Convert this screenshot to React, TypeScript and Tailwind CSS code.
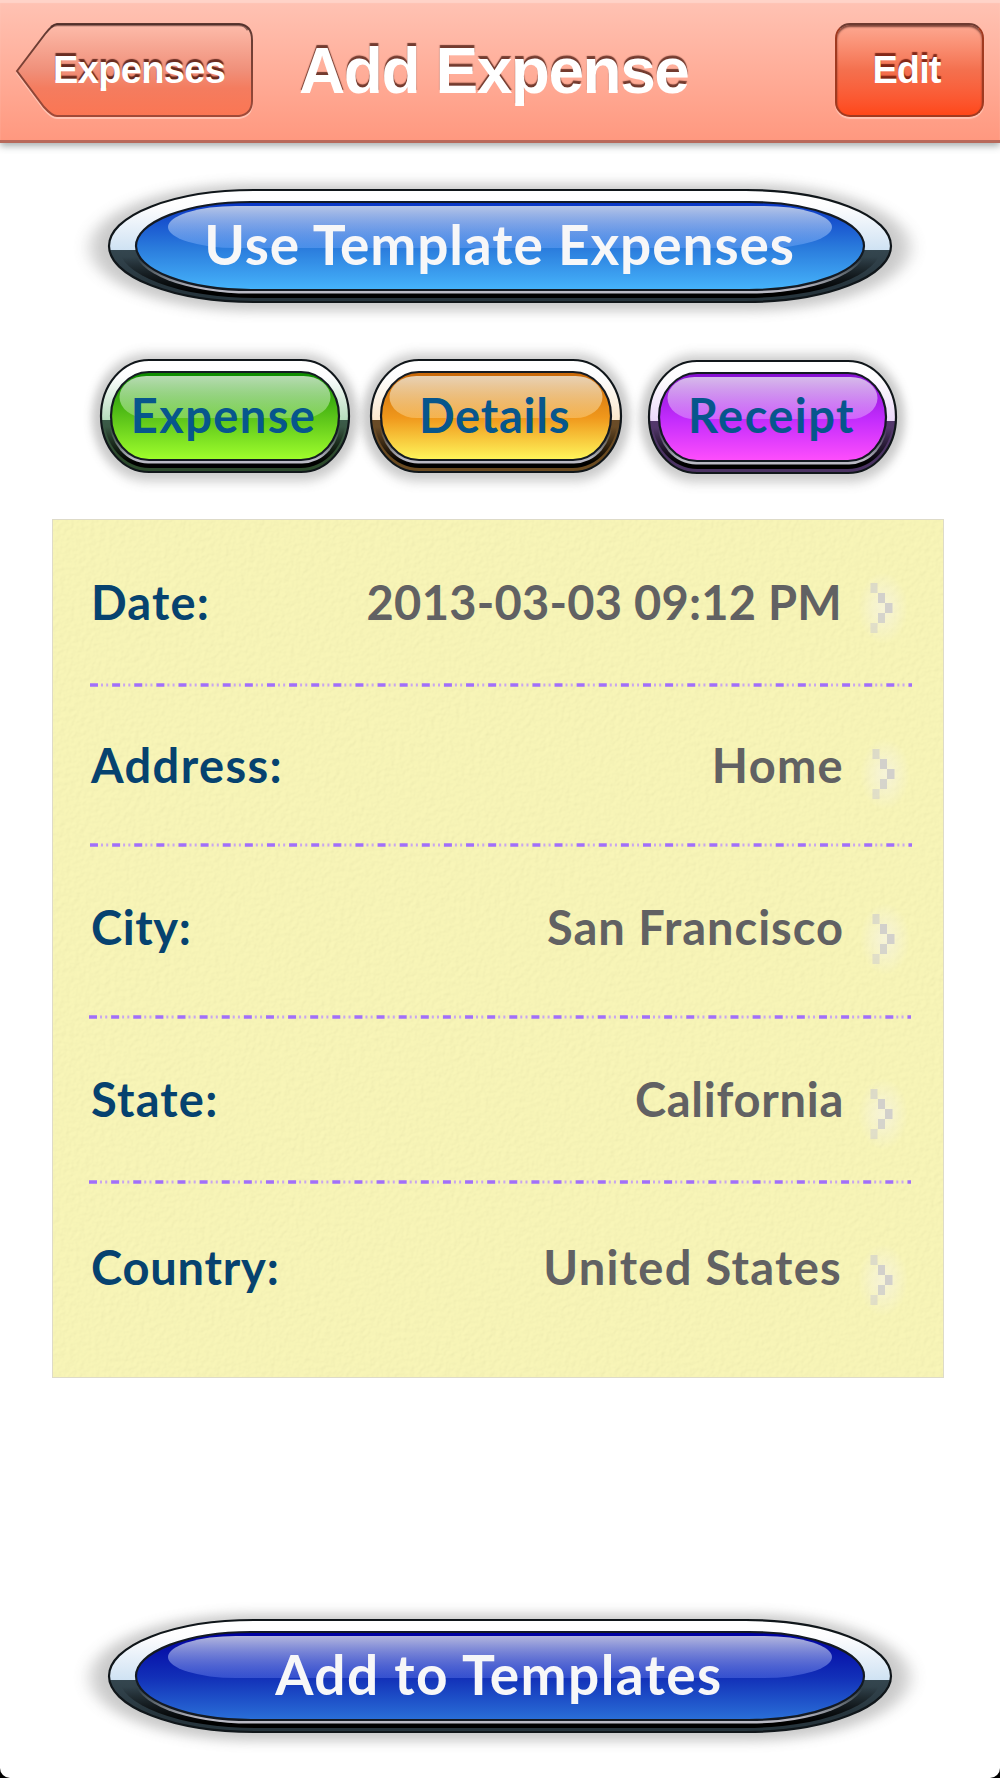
import { Fragment } from "react";

type Palette = {
  tint: string;
  rimDark: string;
  bottom: string;
  top: string;
  mid: string;
  low: string;
  gloss: string;
};

type GlossProps = {
  id: string;
  w: number;
  rx: number;
  inset: number;
  innerRx: number;
  glossInset: number;
  glossRx: number;
  spread: number;
  colors: Palette;
  label: string;
  labelClass: string;
  className: string;
};

function GlossButton({ id, w, rx, inset, innerRx, glossInset, glossRx, spread, colors: c, label, labelClass, className }: GlossProps) {
  const iw = w - inset * 2;
  return (
    <button className={"relative flex h-[114px] items-center justify-center whitespace-nowrap font-['Lato',sans-serif] font-bold " + className}>
      <svg className="absolute inset-0 overflow-visible" width={w} height="114" viewBox={`0 0 ${w} 114`}>
        <defs>
          <linearGradient id={id + "rim"} x1="0" y1="0" x2="0" y2="1">
            <stop offset="0.05" stopColor="#ffffff" />
            <stop offset="0.15" stopColor="#fdfdfe" />
            <stop offset="0.535" stopColor={c.tint} />
            <stop offset="0.54" stopColor={c.rimDark} />
            <stop offset="0.85" stopColor={c.bottom} />
            <stop offset="1" stopColor={c.bottom} />
          </linearGradient>
          <linearGradient id={id + "shade"} x1="0" y1="0" x2="0" y2="1">
            <stop offset="0.6" stopColor="#000" stopOpacity="0" />
            <stop offset="0.95" stopColor="#000" stopOpacity="1" />
          </linearGradient>
          <linearGradient id={id + "hi"} x1="0" y1="0" x2="0" y2="1">
            <stop offset="0.62" stopColor="#b4c2cc" stopOpacity="0" />
            <stop offset="0.95" stopColor="#b9b9c4" stopOpacity="1" />
          </linearGradient>
          <linearGradient id={id + "face"} x1="0" y1="0" x2="0" y2="1">
            <stop offset="0" stopColor={c.top} />
            <stop offset="0.52" stopColor={c.mid} />
            <stop offset="1" stopColor={c.low} />
          </linearGradient>
          <linearGradient id={id + "gloss"} x1="0" y1="0" x2="0" y2="1">
            <stop offset="0" stopColor="#f2f6f2" stopOpacity="0.74" />
            <stop offset="1" stopColor={c.gloss} stopOpacity="0.38" />
          </linearGradient>
          <filter id={id + "blur"} x="-15%" y="-30%" width="130%" height="160%">
            <feGaussianBlur stdDeviation={`${spread * 0.5} 6`} />
          </filter>
        </defs>
        <rect x={-spread} y="-5" width={w + spread * 2} height="127" rx={rx + spread} ry="63" fill="#8a8a8a" opacity="0.46" filter={`url(#${id}blur)`} />
        <rect x="1" y="1" width={w - 2} height="112" rx={rx} ry="56" fill={`url(#${id}rim)`} stroke="#10161a" strokeWidth="2.2" />
        <rect x={inset * 0.4} y="6" width={w - inset * 0.8} height="103" rx={rx * 0.94} ry="51" fill={`url(#${id}shade)`} />
        <rect x={inset - 1} y="13" width={iw + 2} height="91.5" rx={innerRx + 1} ry="45.5" fill={`url(#${id}hi)`} />
        <rect x={inset + 1} y="13" width={iw - 2} height="88" rx={innerRx} ry="44" fill={`url(#${id}face)`} stroke="#141a22" strokeWidth="2.2" />
        <rect x={glossInset} y="17" width={w - glossInset * 2} height="42" rx={glossRx} ry="21" fill={`url(#${id}gloss)`} />
      </svg>
      <span className={"relative " + labelClass}>{label}</span>
    </button>
  );
}

const wide = { w: 784, rx: 145, inset: 27, innerRx: 115, glossInset: 60, glossRx: 68, spread: 17 };
const tab = { rx: 48, inset: 10, innerRx: 38, glossInset: 19.5, glossRx: 27, spread: 8 };

const sky: Palette = { tint: "#cfe2f3", rimDark: "#34464f", bottom: "#26343c", top: "#0a35c4", mid: "#2a7bdc", low: "#46b4fb", gloss: "#7db0ff" };
const navy: Palette = { tint: "#cfe2f3", rimDark: "#34464f", bottom: "#26343c", top: "#0000a0", mid: "#1230b8", low: "#2a70d8", gloss: "#6d86f5" };
const green: Palette = { tint: "#b4dcbc", rimDark: "#3c5c4a", bottom: "#2c4a2c", top: "#0c8a00", mid: "#5cc41a", low: "#a0ff2c", gloss: "#c0f0b0" };
const amber: Palette = { tint: "#fbe8cc", rimDark: "#6a4c28", bottom: "#6a4a20", top: "#c8680a", mid: "#f0981c", low: "#fff75c", gloss: "#ffe0a0" };
const violet: Palette = { tint: "#ecd8fa", rimDark: "#54386c", bottom: "#4a3262", top: "#8410d0", mid: "#c22cfc", low: "#ff4efc", gloss: "#ecc0ff" };

const rows = [
  { label: "Date:", value: "2013-03-03 09:12 PM", box: "h-[162.5px] pt-[2px]", labelClass: "tracking-[1.2px]", valueClass: "mr-[28px] tracking-[0.25px]", chevron: "translate-y-[6px]", divider: "ml-[37px]" },
  { label: "Address:", value: "Home", box: "h-[156px] pt-[2px]", labelClass: "tracking-[1.4px]", valueClass: "mr-[26px] tracking-[1.3px]", chevron: "translate-x-[2px] translate-y-[8px]", divider: "ml-[37px]" },
  { label: "City:", value: "San Francisco", box: "h-[168px] pb-[7px]", labelClass: "tracking-[0.6px]", valueClass: "mr-[26px] tracking-[1px]", chevron: "translate-x-[2px] translate-y-[12px]", divider: "ml-[36px]" },
  { label: "State:", value: "California", box: "h-[161px]", labelClass: "tracking-[1.2px]", valueClass: "mr-[26px] tracking-[0.75px]", chevron: "translate-y-[15px]", divider: "ml-[36px]" },
  { label: "Country:", value: "United States", box: "h-[168px]", labelClass: "tracking-[0.8px]", valueClass: "mr-[28px] tracking-[1.3px]", chevron: "translate-y-[12px]", divider: "" },
];

function Chevron({ className }: { className: string }) {
  return (
    <svg className={"overflow-visible " + className} width="23" height="52" viewBox="0 0 23 52">
      <defs>
        <radialGradient id="glow">
          <stop offset="0" stopColor="#f6f3dc" stopOpacity="0.9" />
          <stop offset="1" stopColor="#f6f3dc" stopOpacity="0" />
        </radialGradient>
      </defs>
      <ellipse cx="13" cy="26" rx="25" ry="36" fill="url(#glow)" />
      <g fill="#d2d0cb">
        <rect x="0.5" y="1" width="7" height="10" opacity="0.7" />
        <rect x="8" y="11" width="7" height="10" />
        <rect x="15" y="21" width="7.5" height="10" />
        <rect x="8" y="31" width="7" height="10" opacity="0.9" />
        <rect x="0.5" y="41" width="7" height="10" opacity="0.6" />
      </g>
    </svg>
  );
}

function Divider({ className }: { className: string }) {
  return (
    <svg className={"block " + className} width="822" height="4" viewBox="0 0 822 4">
      <line x1="0" y1="2" x2="822" y2="2" stroke="#a16ffa" strokeWidth="3.4" strokeDasharray="8 14.12" />
      <line x1="11" y1="2" x2="822" y2="2" stroke="#c9a6ee" strokeWidth="2.8" strokeDasharray="2 3.2 2 14.92" />
    </svg>
  );
}

export default function App() {
  return (
    <div className="h-[1778px] w-[1000px] bg-black">
      <div className="flex h-[1778px] w-[1000px] flex-col overflow-hidden rounded-b-[10px] bg-white">
        <header className="relative z-10 flex h-[143px] shrink-0 items-start border-b-[3px] border-[#b8695a] bg-linear-to-b from-[#ffc3b4] to-[#ff987f] pt-[23px] font-['Liberation_Sans',Arial,sans-serif] font-bold text-white shadow-[0_3px_7px_rgba(60,75,75,0.45),inset_0_3px_1px_#ffd3c8]">
          <button className="relative ml-4 flex h-[94px] w-[237px] shrink-0 items-center">
            <svg className="absolute inset-0 overflow-visible" width="237" height="94" viewBox="0 0 237 94">
              <defs>
                <linearGradient id="back" x1="0" y1="0" x2="0" y2="1">
                  <stop offset="0" stopColor="#fdbcab" />
                  <stop offset="0.5" stopColor="#f0907a" />
                  <stop offset="0.7" stopColor="#f47c5f" />
                  <stop offset="1" stopColor="#fb7653" />
                </linearGradient>
                <linearGradient id="edge" x1="0" y1="0" x2="0" y2="1">
                  <stop offset="0" stopColor="#5e3a33" />
                  <stop offset="1" stopColor="#a04a38" />
                </linearGradient>
              </defs>
              <path d="M1 48 L29 11 Q37 1 43 1 H223 Q236 2 236 17 V78 Q236 91 223 93 H41 Q36 93 28 84 Z" transform="translate(0 2)" fill="none" stroke="#ffc4b4" strokeWidth="2" />
              <path d="M1 48 L29 11 Q37 1 41 1 H223 Q236 2 236 17 V78 Q236 91 223 93 H41 Q36 93 28 84 Z" fill="url(#back)" stroke="url(#edge)" strokeWidth="2" />
              <path d="M35 4 Q38 2 41 2 H223 Q229 2 232 7" fill="none" stroke="#4a2a26" strokeOpacity="0.6" strokeWidth="2.5" />
            </svg>
            <span className="relative ml-[37px] text-[38px] leading-[44px] tracking-[-0.65px] [text-shadow:0_-3px_1px_rgba(80,25,15,0.85)]">Expenses</span>
          </button>
          <h1 className="ml-[46px] mt-[12px] w-[390px] whitespace-nowrap text-[64px] leading-[72px] tracking-[-1.45px] [text-shadow:0_-3px_1px_rgba(80,30,20,0.8)]">Add Expense</h1>
          <button className="ml-auto mr-4 flex h-[94px] w-[149px] items-center justify-center rounded-[15px] border-2 border-[#a03a20] border-t-[#6e3a30] bg-linear-to-b from-[#fda891] via-[#f4704e] to-[#ff4718] text-[38px] shadow-[0_2px_1px_#ffc4b4,inset_0_2px_2px_rgba(70,25,20,0.7)]">
            <span className="mr-[6px] tracking-[-0.9px] [text-shadow:0_-3px_1px_rgba(110,25,10,0.85)]">Edit</span>
          </button>
        </header>

        <main className="flex flex-1 flex-col">
          <GlossButton {...wide} id="use" colors={sky} label="Use Template Expenses" labelClass="pb-[4px] pr-px text-[55px] tracking-[0.9px] text-[#f7f7f8]" className="ml-[108px] mt-[46px] w-[784px]" />

          <nav className="ml-[100px] mt-[56px] flex">
            <GlossButton {...tab} id="exp" w={250} colors={green} label="Expense" labelClass="pb-[2px] pr-[3px] text-[47px] tracking-[1.4px] text-[#07568c]" className="w-[250px]" />
            <GlossButton {...tab} id="det" w={252} colors={amber} label="Details" labelClass="pb-[2px] pr-[3px] text-[47px] tracking-[0.75px] text-[#07568c]" className="ml-[20px] w-[252px]" />
            <GlossButton {...tab} id="rec" w={249} colors={violet} label="Receipt" labelClass="pb-[4px] pr-[2px] text-[47px] tracking-[1.45px] text-[#07568c]" className="ml-[26px] mt-px w-[249px]" />
          </nav>

          <section className="relative ml-[52px] mt-[45px] h-[859px] w-[892px] border border-[#dedbc8] bg-[#f4f1b5] font-['Lato',sans-serif] text-[47px] font-bold">
            <svg className="absolute inset-0" width="890" height="857">
              <filter id="paper" x="0" y="0" width="100%" height="100%">
                <feTurbulence type="fractalNoise" baseFrequency="0.2" numOctaves="2" seed="4" />
                <feDiffuseLighting surfaceScale="0.5" lightingColor="#fffcbc">
                  <feDistantLight azimuth="225" elevation="70" />
                </feDiffuseLighting>
              </filter>
              <rect width="890" height="857" filter="url(#paper)" opacity="0.6" />
            </svg>
            <div className="relative">
              {rows.map((r) => (
                <Fragment key={r.label}>
                  <div className={"flex items-center pl-[38px] pr-[50px] " + r.box}>
                    <span className={"text-[#06426f] " + r.labelClass}>{r.label}</span>
                    <span className={"ml-auto text-[#616163] " + r.valueClass}>{r.value}</span>
                    <Chevron className={r.chevron} />
                  </div>
                  {r.divider && <Divider className={r.divider} />}
                </Fragment>
              ))}
            </div>
          </section>

          <GlossButton {...wide} id="add" colors={navy} label="Add to Templates" labelClass="pb-[4px] pr-[2px] text-[55px] tracking-[1.4px] text-[#f7f7f8]" className="ml-[108px] mt-[241px] w-[784px]" />
        </main>
      </div>
    </div>
  );
}
